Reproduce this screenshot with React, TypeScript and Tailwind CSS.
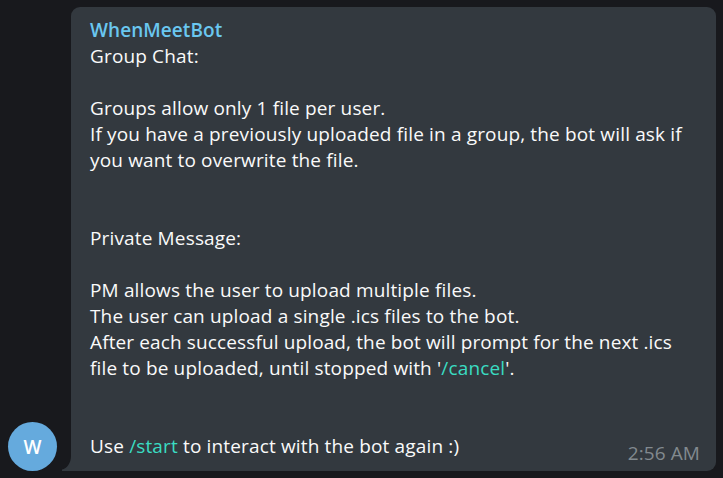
import React from 'react';

const Cmd = ({ children }: { children: React.ReactNode }) => <span className="text-[#3adcc2]">{children}</span>;

const lines: React.ReactNode[] = [
  'Group Chat:',
  '',
  'Groups allow only 1 file per user.',
  'If you have a previously uploaded file in a group, the bot will ask if',
  'you want to overwrite the file.',
  '',
  '',
  'Private Message:',
  '',
  'PM allows the user to upload multiple files.',
  'The user can upload a single .ics files to the bot.',
  'After each successful upload, the bot will prompt for the next .ics',
  <>file to be uploaded, until stopped with '<Cmd>/cancel</Cmd>'.</>,
  '',
  '',
  <>Use <Cmd>/start</Cmd> to interact with the bot again :)</>,
];

export default function App() {
  return (
    <div className="flex h-[478px] w-[723px] items-end overflow-hidden bg-[#18191d] pb-[7px] pl-2 font-['Open_Sans',sans-serif]">
      <div className="flex h-[49px] w-[49px] shrink-0 items-center justify-center rounded-full bg-[#65aadd] pt-[2px] text-[19px] font-semibold text-white">W</div>
      <svg className="ml-[4px] h-[20px] w-[10px] shrink-0" viewBox="0 0 10 20" fill="#33393f">
        <path d="M10 5V20H1V18.6C6 17.5 10 12 10 5Z" />
      </svg>
      <main className="relative h-[464px] w-[645px] shrink-0 rounded-[9px] rounded-bl-none bg-[#33393f] pl-[19px] pt-[10px] text-[19px] leading-[26px] text-[#fafafa]">
        <h1 className="font-semibold tracking-[0.06px] text-[#6ac7f0]">WhenMeetBot</h1>
        {lines.map((line, i) => (
          <p key={i} className={`h-[26px] whitespace-nowrap ${i === 11 ? 'tracking-[0.125px]' : 'tracking-[0.15px]'}`}>{line}</p>
        ))}
        <time className="absolute bottom-[5px] right-[16px] tracking-[0.1px] text-[#828a8f]">2:56 AM</time>
      </main>
    </div>
  );
}
